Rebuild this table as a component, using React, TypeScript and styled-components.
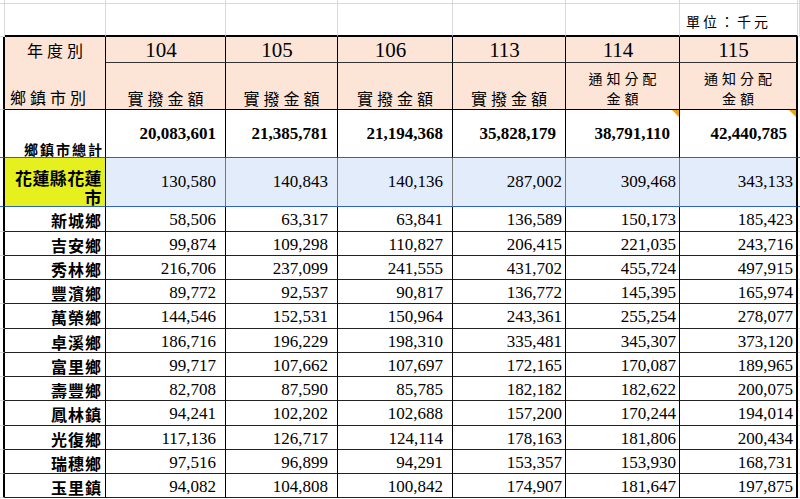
import React from "react";
import styled, { createGlobalStyle, css } from "styled-components";

const GlobalStyle = createGlobalStyle`
  html, body { margin: 0; padding: 0; background: #ffffff; overflow: hidden; }
  * { box-sizing: border-box; }
`;

const COLS = "5px 101px 120px 112px 115px 113px 114px 118px 1fr";
const SERIF = `"Liberation Serif", "Times New Roman", serif`;
const CJK = `"Noto Sans CJK TC", "Noto Sans CJK SC", sans-serif`;
const PEACH = "#fce4d6";
const GRID = "#d9d9d9";

const Sheet = styled.div`
  width: 800px;
  height: 499px;
  overflow: hidden;
  background: #fff;
  color: #000;
`;

const Row = styled.div<{ $h: number }>`
  display: grid;
  grid-template-columns: ${COLS};
  height: ${(p) => p.$h}px;
`;

const GridCell = styled.div<{ $bottom?: string }>`
  border-right: 1px solid ${GRID};
  border-bottom: ${(p) => p.$bottom || `1px solid ${GRID}`};
`;

const Sliver = styled.div<{ $line?: string }>`
  border-right: 2px solid #000;
  border-bottom: 1px solid ${(p) => p.$line || GRID};
`;

const UnitCell = styled.div`
  border-right: 1px solid ${GRID};
  border-bottom: 2px solid #000;
  display: flex;
  align-items: flex-end;
  padding: 0 0 5px 6px;
  font-family: ${CJK};
  font-size: 14px;
  letter-spacing: 3px;
  line-height: 18px;
`;

const Header = styled.div`
  display: grid;
  grid-template-columns: ${COLS};
  grid-template-rows: 26px 47px;
`;

const HeadSliver = styled.div`
  grid-row: 1 / span 2;
  border-right: 2px solid #000;
  border-bottom: 1px solid ${GRID};
`;

const Corner = styled.div`
  grid-row: 1 / span 2;
  background: ${PEACH};
  border-right: 1px solid #000;
  border-bottom: 1px solid #000;
  display: flex;
  flex-direction: column;
  justify-content: space-between;
  font-family: ${CJK};
  font-size: 16px;
  letter-spacing: 4px;
  line-height: 20px;
`;

const CornerTop = styled.div`
  text-align: center;
  padding: 3px 0 0 4px;
`;

const CornerBottom = styled.div`
  padding: 0 0 2px 5px;
`;

const YearCell = styled.div<{ $last?: boolean; $col: number }>`
  grid-row: 1;
  grid-column: ${(p) => p.$col};
  background: ${PEACH};
  border-right: ${(p) => (p.$last ? "2px solid #000" : "1px solid #000")};
  border-bottom: 1px solid #333;
  display: flex;
  align-items: center;
  justify-content: center;
  padding-right: 9px;
  font-family: ${SERIF};
  font-size: 21px;
  line-height: 24px;
`;

const TitleCell = styled.div<{ $last?: boolean; $small?: boolean; $col: number }>`
  grid-row: 2;
  grid-column: ${(p) => p.$col};
  background: ${PEACH};
  border-right: ${(p) => (p.$last ? "2px solid #000" : "1px solid #000")};
  border-bottom: 1px solid #000;
  display: flex;
  flex-direction: column;
  align-items: center;
  justify-content: flex-end;
  padding: 0 0 1px 4px;
  font-family: ${CJK};
  font-size: ${(p) => (p.$small ? 14 : 16)}px;
  letter-spacing: 4px;
  line-height: 20px;
`;

const Body = styled.div<{ $rows: string }>`
  display: grid;
  grid-template-columns: ${COLS};
  grid-template-rows: ${(p) => p.$rows};
`;

type Kind = "total" | "city" | "data";

const lineFor = (k: Kind) => (k === "data" ? "1px solid #222" : "1px solid #2f64c4");

const Label = styled.div<{ $kind: Kind }>`
  border-right: 1px solid #000;
  border-bottom: ${(p) => lineFor(p.$kind)};
  font-family: ${CJK};
  font-weight: 700;
  display: flex;
  justify-content: flex-end;
  text-align: right;
  padding-right: 3px;
  ${(p) =>
    p.$kind === "total"
      ? css`
          align-items: flex-end;
          font-size: 14px;
          letter-spacing: 2px;
          padding-right: 1px;
          padding-bottom: 1px;
          line-height: 14px;
        `
      : p.$kind === "city"
      ? css`
          background: #e6f01e;
          align-items: flex-end;
          font-size: 17px;
          letter-spacing: 0.4px;
          line-height: 19px;
          padding-left: 2px;
        `
      : css`
          align-items: center;
          font-size: 16px;
          letter-spacing: 1px;
          line-height: 20px;
          padding-top: 2px;
        `}
`;

const Num = styled.div<{ $kind: Kind; $pad: number; $last?: boolean; $mark?: boolean }>`
  position: relative;
  border-right: ${(p) => (p.$last ? "2px solid #000" : p.$kind === "city" ? "1px solid #777" : "1px solid #000")};
  border-bottom: ${(p) => lineFor(p.$kind)};
  background: ${(p) => (p.$kind === "city" ? "#e3ecfa" : "#fff")};
  display: flex;
  align-items: center;
  justify-content: flex-end;
  padding-right: ${(p) => p.$pad}px;
  padding-top: ${(p) => (p.$kind === "data" ? 2 : 0)}px;
  font-family: ${SERIF};
  font-size: 17px;
  font-weight: ${(p) => (p.$kind === "total" ? 700 : 400)};
  line-height: 20px;
  ${(p) =>
    p.$mark &&
    css`
      &::after {
        content: "";
        position: absolute;
        top: 0;
        right: 0;
        width: 0;
        height: 0;
        border-top: 7px solid #f0a30a;
        border-left: 7px solid transparent;
      }
    `}
`;

const Tail = styled.div<{ $line?: string }>`
  border-bottom: 1px solid ${(p) => p.$line || GRID};
`;

const years = ["104", "105", "106", "113", "114", "115"];

const total = ["20,083,601", "21,385,781", "21,194,368", "35,828,179", "38,791,110", "42,440,785"];
const city = ["130,580", "140,843", "140,136", "287,002", "309,468", "343,133"];

const rows: [string, string[]][] = [
  ["新城鄉", ["58,506", "63,317", "63,841", "136,589", "150,173", "185,423"]],
  ["吉安鄉", ["99,874", "109,298", "110,827", "206,415", "221,035", "243,716"]],
  ["秀林鄉", ["216,706", "237,099", "241,555", "431,702", "455,724", "497,915"]],
  ["豐濱鄉", ["89,772", "92,537", "90,817", "136,772", "145,395", "165,974"]],
  ["萬榮鄉", ["144,546", "152,531", "150,964", "243,361", "255,254", "278,077"]],
  ["卓溪鄉", ["186,716", "196,229", "198,310", "335,481", "345,307", "373,120"]],
  ["富里鄉", ["99,717", "107,662", "107,697", "172,165", "170,087", "189,965"]],
  ["壽豐鄉", ["82,708", "87,590", "85,785", "182,182", "182,622", "200,075"]],
  ["鳳林鎮", ["94,241", "102,202", "102,688", "157,200", "170,244", "194,014"]],
  ["光復鄉", ["117,136", "126,717", "124,114", "178,163", "181,806", "200,434"]],
  ["瑞穗鄉", ["97,516", "96,899", "94,291", "153,357", "153,930", "168,731"]],
  ["玉里鎮", ["94,082", "104,808", "100,842", "174,907", "181,647", "197,875"]],
];

const padFor = (kind: Kind, i: number) => (i < 3 || kind === "total" ? 9 : 3);

function NumRow({ kind, label, values }: { kind: Kind; label: React.ReactNode; values: string[] }) {
  const line = kind === "data" ? GRID : "#2f64c4";
  return (
    <>
      <Sliver $line={line} />
      <Label $kind={kind}>{label}</Label>
      {values.map((v, i) => (
        <Num
          key={i}
          $kind={kind}
          $pad={padFor(kind, i)}
          $last={i === values.length - 1}
          $mark={kind === "total" && i >= 4}
        >
          {v}
        </Num>
      ))}
      <Tail $line={line} />
    </>
  );
}

export default function App() {
  const rowHeights = ["48px", "49px", ...rows.map((_, i) => (i % 4 === 0 ? "25px" : "24px"))].join(" ");
  return (
    <Sheet>
      <GlobalStyle />
      <Row $h={4}>
        {Array.from({ length: 9 }).map((_, i) => (
          <GridCell key={i} />
        ))}
      </Row>
      <Row $h={33}>
        <GridCell />
        {Array.from({ length: 6 }).map((_, i) => (
          <GridCell key={i} $bottom="2px solid #000" />
        ))}
        <UnitCell>單位：千元</UnitCell>
        <GridCell />
      </Row>
      <Header>
        <HeadSliver />
        <Corner>
          <CornerTop>年度別</CornerTop>
          <CornerBottom>鄉鎮市別</CornerBottom>
        </Corner>
        {years.map((y, i) => (
          <YearCell key={y} $last={i === 5} $col={i + 3}>
            {y}
          </YearCell>
        ))}
        {years.map((y, i) =>
          i >= 4 ? (
            <TitleCell key={y} $last={i === 5} $small $col={i + 3}>
              <span>通知分配</span>
              <span>金額</span>
            </TitleCell>
          ) : (
            <TitleCell key={y} $col={i + 3}>
              <span>實撥金額</span>
            </TitleCell>
          )
        )}
      </Header>
      <Body $rows={rowHeights}>
        <NumRow kind="total" label="鄉鎮市總計" values={total} />
        <NumRow kind="city" label="花蓮縣花蓮市" values={city} />
        {rows.map(([name, vals]) => (
          <NumRow key={name} kind="data" label={name} values={vals} />
        ))}
      </Body>
    </Sheet>
  );
}
